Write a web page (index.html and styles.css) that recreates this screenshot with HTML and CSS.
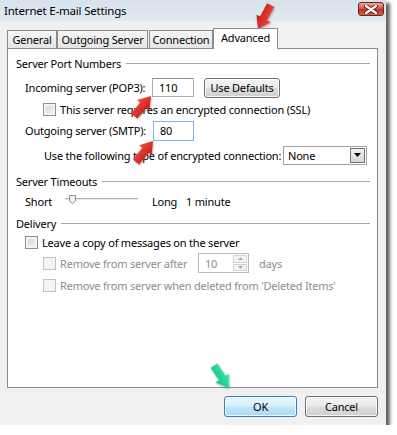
FILE: index.html
```html
<!DOCTYPE html>
<html lang="en">
<head>
    <meta charset="UTF-8">
    <title>Internet E-mail Settings</title>
    <link rel="stylesheet" href="styles.css">
</head>
<body>
    <div class="window">
        <div class="titlebar">
            <span class="title">Internet E-mail Settings</span>
            <span class="close">
                <svg width="14" height="9" viewBox="0 0 14 9">
                    <path d="M2 1 L12 8 M12 1 L2 8" stroke="#5a1a14" stroke-width="4" stroke-linecap="round"/>
                    <path d="M2 1 L12 8 M12 1 L2 8" stroke="#fff" stroke-width="2.2" stroke-linecap="round"/>
                </svg>
            </span>
        </div>

        <div class="tabs">
            <div class="tab t-general">General</div>
            <div class="tab t-outgoing">Outgoing Server</div>
            <div class="tab t-connection">Connection</div>
            <div class="tab active">Advanced</div>
        </div>

        <div class="panel">
            <div class="group-head"><span>Server Port Numbers</span></div>
            <div class="row r-in">
                <span class="lbl lbl-in">Incoming server (POP3):</span>
                <span class="field f-in">110</span>
                <span class="btn defaults">Use Defaults</span>
            </div>
            <div class="row r-ssl">
                <span class="check"></span>
                <span>This server requires an encrypted connection (SSL)</span>
            </div>
            <div class="row r-out">
                <span class="lbl lbl-out">Outgoing server (SMTP):</span>
                <span class="field f-out">80</span>
            </div>
            <div class="row r-enc">
                <span class="enc-text">Use the following type of encrypted connection:</span>
                <span class="select">
                    <span class="sel-val">None</span>
                    <span class="sel-btn">
                        <svg width="7" height="4" viewBox="0 0 7 4"><path d="M0 0 H7 L3.5 4 Z" fill="#000"/></svg>
                    </span>
                </span>
            </div>

            <div class="group-head g2"><span>Server Timeouts</span></div>
            <div class="row r-time">
                <span class="short">Short</span>
                <span class="slider">
                    <span class="track"></span>
                    <svg class="thumb" width="7" height="9" viewBox="0 0 7 9">
                        <path d="M0.5 0.5 H6.5 V6 L3.5 8.5 L0.5 6 Z" fill="#f4f4f4" stroke="#8c8c8c"/>
                    </svg>
                </span>
                <span class="long">Long</span>
                <span>1 minute</span>
            </div>

            <div class="group-head g3"><span>Delivery</span></div>
            <div class="row r-leave">
                <span class="check"></span>
                <span>Leave a copy of messages on the server</span>
            </div>
            <div class="row r-after disabled">
                <span class="check"></span>
                <span class="after-text">Remove from server after</span>
                <span class="spinner">
                    <span class="spin-val">10</span>
                    <span class="spin-btns">
                        <span class="spin-up"><svg width="5" height="3" viewBox="0 0 5 3"><path d="M0 3 L2.5 0 L5 3 Z" fill="#a9a9a9"/></svg></span>
                        <span class="spin-down"><svg width="5" height="3" viewBox="0 0 5 3"><path d="M0 0 H5 L2.5 3 Z" fill="#a9a9a9"/></svg></span>
                    </span>
                </span>
                <span class="days">days</span>
            </div>
            <div class="row r-deleted disabled">
                <span class="check"></span>
                <span>Remove from server when deleted from 'Deleted Items'</span>
            </div>
        </div>

        <div class="footer">
            <span class="btn ok">OK</span>
            <span class="btn">Cancel</span>
        </div>
    </div>

    <!-- callout arrows drawn over the screenshot -->
    <svg class="arrows" width="397" height="435" viewBox="0 0 397 435">
        <defs>
            <filter id="soft" x="-30%" y="-30%" width="160%" height="160%">
                <feDropShadow dx="0.5" dy="1" stdDeviation="0.8" flood-color="#000" flood-opacity="0.35"/>
            </filter>
            <linearGradient id="red" x1="0" y1="0" x2="0" y2="1">
                <stop offset="0" stop-color="#f04a3c"/>
                <stop offset="1" stop-color="#c21d17"/>
            </linearGradient>
            <linearGradient id="green" x1="0" y1="0" x2="0" y2="1">
                <stop offset="0" stop-color="#3ee6ad"/>
                <stop offset="1" stop-color="#12c287"/>
            </linearGradient>
        </defs>
        <g filter="url(#soft)">
            <polygon transform="translate(258 29) rotate(118)" points="0,0 -12,-8 -12,-4 -27,-4 -27,4 -12,4 -12,8" fill="url(#red)"/>
            <polygon transform="translate(151 96) rotate(-50)" points="0,0 -12,-8 -12,-4 -26,-4 -26,4 -12,4 -12,8" fill="url(#red)"/>
            <polygon transform="translate(153 141) rotate(-51)" points="0,0 -12,-8 -12,-4 -27,-4 -27,4 -12,4 -12,8" fill="url(#red)"/>
            <polygon transform="translate(229 388) rotate(56)" points="0,0 -12,-8 -12,-4 -27,-4 -27,4 -12,4 -12,8" fill="url(#green)"/>
        </g>
    </svg>
</body>
</html>
```

FILE: styles.css
```css
body {
    margin: 0;
    background: #fff;
    font-family: "Noto Sans", "Open Sans", sans-serif;
    font-size: 11px;
    letter-spacing: -0.2px;
    color: #000;
    white-space: nowrap;
}
.window {
    position: relative;
    width: 386px;
    height: 425px;
    background: #f0f0f0;
    box-shadow: 4px 3px 3px rgba(0, 0, 0, 0.6);
}
.titlebar {
    height: 21px;
    display: flex;
    align-items: center;
    justify-content: space-between;
    padding: 0 2px 0 4px;
    background: linear-gradient(to bottom, #d7e2ed, #e2e9f0);
}
.title {
    font-size: 11.5px;
    line-height: 21px;
}
.close {
    width: 26px;
    height: 14px;
    box-sizing: border-box;
    border: 1px solid #6c2320;
    border-radius: 3px;
    background: linear-gradient(to bottom, #e9a99b, #d0533f 50%, #bd3220 51%, #d2624c);
    display: flex;
    align-items: center;
    justify-content: center;
    margin-top: -3px;
}

/* tabs */
.tabs {
    display: flex;
    align-items: flex-end;
    height: 20px;
    margin: 7px 0 0 7px;
}
.tab {
    height: 18px;
    box-sizing: border-box;
    border: 1px solid #898c95;
    border-bottom: none;
    background: linear-gradient(to bottom, #f6f6f6, #e4e4e4);
    display: flex;
    align-items: center;
    justify-content: center;
    line-height: 16px;
    padding-top: 1px;
}
.t-general { width: 50px; }
.t-outgoing { width: 91px; }
.t-connection { width: 64px; margin-left: 1px; }
.tab.active {
    position: relative;
    z-index: 1;
    width: 65px;
    height: 21px;
    margin-bottom: -1px;
    background: #fff;
    padding: 0 0 2px;
}

/* panel */
.panel {
    width: 371px;
    height: 340px;
    box-sizing: border-box;
    margin-left: 7px;
    border: 1px solid #898c95;
    background: #fff;
    padding: 4px 7px 0 8px;
}
.group-head {
    height: 20px;
    display: flex;
    align-items: center;
}
.group-head::after {
    content: "";
    flex: 1;
    height: 0;
    border-top: 1px solid #a8a8a8;
    margin-left: 5px;
}
.g2 { margin-top: 6px; }
.g3 { margin-top: 2px; }
.row {
    display: flex;
    align-items: center;
}
.r-in { height: 29px; padding-left: 9px; }
.r-ssl { height: 14px; padding-left: 27px; }
.r-out { height: 29px; padding-left: 9px; }
.r-enc { height: 20px; padding-left: 28px; }
.r-time { height: 20px; padding-left: 9px; }
.r-leave { height: 18px; padding-left: 9px; }
.r-after { height: 22px; padding-left: 27px; margin-top: 1px; }
.r-deleted { height: 22px; padding-left: 27px; }
.lbl-in { width: 127px; }
.lbl-out { width: 128px; }
.field {
    height: 19px;
    box-sizing: border-box;
    border: 1px solid #abadb3;
    border-top-color: #8d9095;
    padding-left: 6px;
    line-height: 17px;
    background: #fff;
}
.f-in { width: 42px; }
.f-out {
    width: 41px;
    height: 20px;
    border-color: #7eb4ea;
    line-height: 18px;
}
.btn {
    height: 21px;
    width: 73px;
    box-sizing: border-box;
    border: 1px solid #707070;
    border-radius: 3px;
    background: linear-gradient(to bottom, #f3f3f3, #ebebeb 48%, #dddddd 52%, #cfcfcf);
    box-shadow: inset 0 0 0 1px rgba(255, 255, 255, 0.8);
    display: flex;
    align-items: center;
    justify-content: center;
    flex-shrink: 0;
}
.defaults {
    width: 76px;
    height: 20px;
    margin-left: 10px;
}
.check {
    width: 13px;
    height: 13px;
    box-sizing: border-box;
    border: 1px solid #8f8f8f;
    background: linear-gradient(135deg, #cfcfcf, #f7f7f7);
    box-shadow: inset 0 0 0 2px #f4f4f4;
    margin-right: 4px;
    flex-shrink: 0;
}
.enc-text { width: 239px; flex-shrink: 0; }
.select {
    width: 84px;
    height: 19px;
    box-sizing: border-box;
    border: 1px solid #a3a3a3;
    display: flex;
    align-items: center;
    justify-content: space-between;
    padding: 1px;
    flex-shrink: 0;
}
.sel-val { padding-left: 3px; }
.sel-btn {
    width: 15px;
    height: 15px;
    box-sizing: border-box;
    border: 1px solid #707070;
    background: linear-gradient(to bottom, #f2f2f2, #d6d6d6);
    display: flex;
    align-items: center;
    justify-content: center;
}
.short { width: 40px; }
.slider {
    position: relative;
    width: 73px;
    height: 20px;
    display: flex;
    align-items: center;
}
.track {
    width: 100%;
    height: 2px;
    box-sizing: border-box;
    border-top: 1px solid #b4b4b4;
    border-bottom: 1px solid #e8e8e8;
    margin-top: -5px;
}
.thumb {
    position: absolute;
    left: 4px;
    top: 4px;
}
.long {
    width: 34px;
    margin-left: 14px;
}
.disabled { color: #8d8d8d; }
.disabled .check {
    border-color: #c2c2c2;
    background: #f4f4f4;
    box-shadow: none;
}
.after-text { width: 138px; }
.spinner {
    width: 51px;
    height: 20px;
    box-sizing: border-box;
    border: 1px solid #b8bcc0;
    display: flex;
    justify-content: space-between;
    padding: 1px;
    flex-shrink: 0;
}
.spin-val { padding-left: 5px; line-height: 17px; }
.spin-btns {
    width: 14px;
    display: flex;
    flex-direction: column;
    gap: 1px;
}
.spin-btns span {
    flex: 1;
    border: 1px solid #d2d2d2;
    background: #f4f4f4;
    display: flex;
    align-items: center;
    justify-content: center;
}
.days { margin-left: 10px; }

/* bottom buttons */
.footer {
    display: flex;
    justify-content: flex-end;
    gap: 8px;
    padding: 8px 8px 0 0;
}
.ok {
    border-color: #3c7fb1;
    background: linear-gradient(to bottom, #eaf6fd, #d9f0fc 48%, #bee6fd 52%, #a7d9f5);
}

.arrows {
    position: absolute;
    left: 0;
    top: 0;
    pointer-events: none;
}
```
